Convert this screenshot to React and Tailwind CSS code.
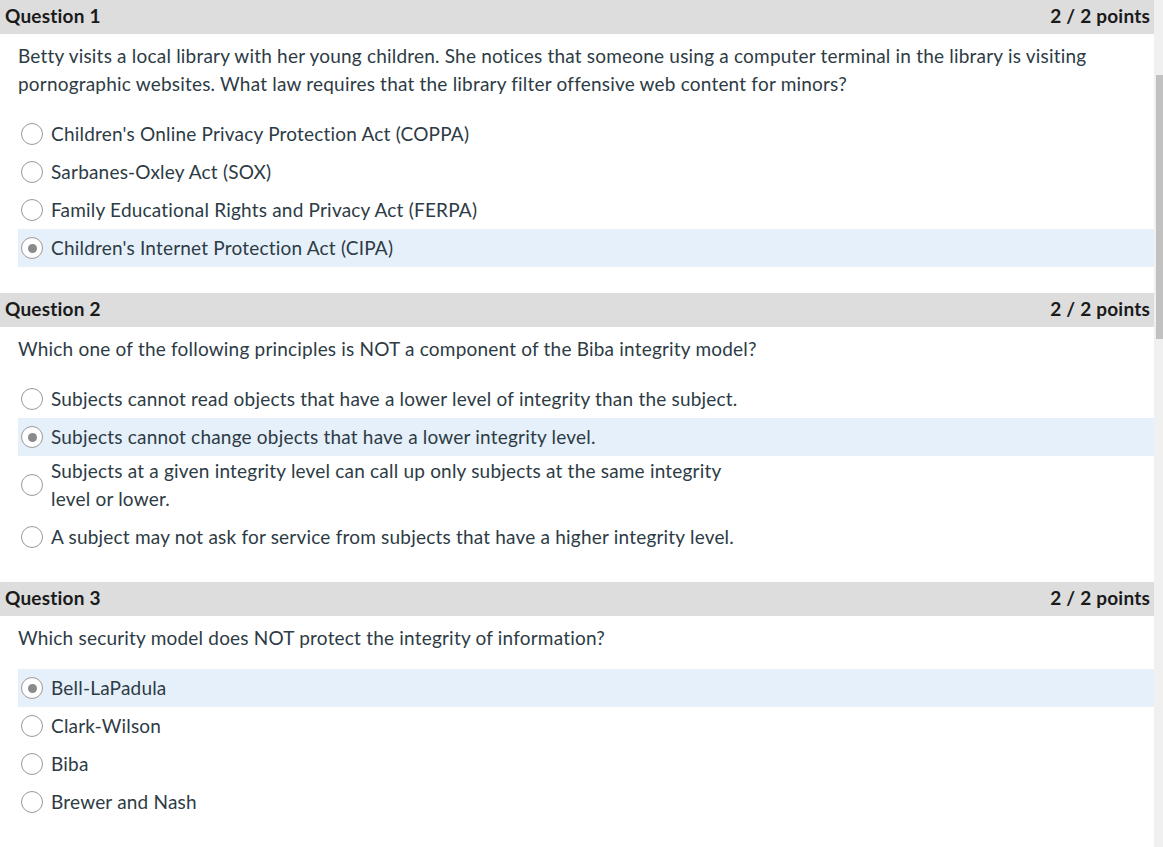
import React from 'react';

const questions = [
  {
    n: 1,
    text: 'Betty visits a local library with her young children. She notices that someone using a computer terminal in the library is visiting pornographic websites. What law requires that the library filter offensive web content for minors?',
    options: [
      "Children's Online Privacy Protection Act (COPPA)",
      'Sarbanes-Oxley Act (SOX)',
      'Family Educational Rights and Privacy Act (FERPA)',
      "Children's Internet Protection Act (CIPA)"
    ],
    selected: 3
  },
  {
    n: 2,
    text: 'Which one of the following principles is NOT a component of the Biba integrity model?',
    options: [
      'Subjects cannot read objects that have a lower level of integrity than the subject.',
      'Subjects cannot change objects that have a lower integrity level.',
      ['Subjects at a given integrity level can call up only subjects at the same integrity', 'level or lower.'],
      'A subject may not ask for service from subjects that have a higher integrity level.'
    ],
    selected: 1
  },
  {
    n: 3,
    text: 'Which security model does NOT protect the integrity of information?',
    options: ['Bell-LaPadula', 'Clark-Wilson', 'Biba', 'Brewer and Nash'],
    selected: 0
  }
];

function Radio({ checked }) {
  return (
    <span className="flex h-[22px] w-[22px] shrink-0 items-center justify-center rounded-full border border-[#9a9a9a] bg-white">
      {checked && <span className="h-[9px] w-[9px] rounded-full bg-[#8a8a8a]" />}
    </span>
  );
}

function Option({ label, checked }) {
  const multi = Array.isArray(label);
  return (
    <div
      className={
        'flex items-center gap-[8px] pl-[3px] ' +
        (multi ? 'pt-[1px] pb-[5px] ' : 'py-[5px] ') +
        (checked ? 'bg-[#e6f0fa]' : '')
      }
    >
      <Radio checked={checked} />
      <span>
        {multi ? (
          <>
            {label[0]}
            <br />
            {label[1]}
          </>
        ) : (
          label
        )}
      </span>
    </div>
  );
}

function Question({ q }) {
  return (
    <section className="mb-[26px]">
      {/* header bar */}
      <div className="flex h-[34px] items-center justify-between bg-[#dddddd] pb-[2px] pl-[5px] pr-[4px] font-bold text-[#1a1a1a]">
        <span>Question {q.n}</span>
        <span>2 / 2 points</span>
      </div>
      <div className="pl-[18px]">
        <p className="pt-[8px] pr-[40px]">{q.text}</p>
        <div className="mt-[17px]">
          {q.options.map((o, i) => (
            <Option key={i} label={o} checked={i === q.selected} />
          ))}
        </div>
      </div>
    </section>
  );
}

export default function App() {
  return (
    <div
      className="flex h-[847px] w-[1163px] overflow-hidden bg-white text-[19px] leading-[28px] tracking-[0.2px] text-[#2d3b45] [font-variant-ligatures:none]"
      style={{ fontFamily: 'Lato, "Open Sans", sans-serif' }}
    >
      <main className="w-[1154px] shrink-0">
        {questions.map((q) => (
          <Question key={q.n} q={q} />
        ))}
      </main>
      {/* scrollbar */}
      <div className="flex-1 bg-[#f0f0f0] pt-[75px]">
        <div className="ml-[2px] h-[264px] w-[7px] bg-[#c1c1c1]" />
      </div>
    </div>
  );
}
